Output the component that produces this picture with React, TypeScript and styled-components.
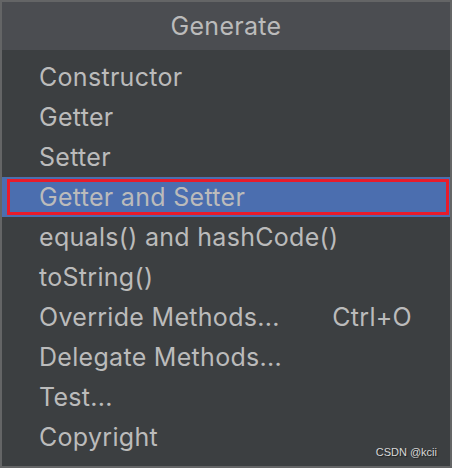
import React from 'react'
import styled, { createGlobalStyle } from 'styled-components'

const GlobalStyle = createGlobalStyle`
	html, body {
		margin: 0;
		padding: 0;
		background: #3c3f41;
	}
`

type Item = { label: string; shortcut?: string }

const items: Item[] = [
	{ label: 'Constructor' },
	{ label: 'Getter' },
	{ label: 'Setter' },
	{ label: 'Getter and Setter' },
	{ label: 'equals() and hashCode()' },
	{ label: 'toString()' },
	{ label: 'Override Methods...', shortcut: 'Ctrl+O' },
	{ label: 'Delegate Methods...' },
	{ label: 'Test...' },
	{ label: 'Copyright' },
]

const Popup = styled.div`
	position: relative;
	width: 452px;
	height: 468px;
	box-sizing: border-box;
	border: 2px solid #646566;
	background: #3c3f41;
	font-family: Inter, 'Noto Sans', sans-serif;
	color: #bbbbbb;
	display: flex;
	flex-direction: column;
`

const Header = styled.div`
	height: 48px;
	background: #4b4d51;
	display: flex;
	align-items: center;
	justify-content: center;
	font-size: 25px;
	letter-spacing: 0.3px;
	box-sizing: border-box;
`

const List = styled.ul`
	list-style: none;
	margin: 0;
	padding: 7px 0 0;
`

const Row = styled.li<{ $selected?: boolean }>`
	position: relative;
	height: 40px;
	display: flex;
	align-items: center;
	padding: 0 38px 0 37px;
	font-size: 25px;
	letter-spacing: 0.3px;
	background: ${(p) => (p.$selected ? '#4b6eaf' : 'transparent')};
`

const Label = styled.span`
	flex: 1;
`

const Shortcut = styled.span`
	margin-right: 0;
`

// red annotation box drawn over the selected row
const Marker = styled.div`
	position: absolute;
	left: 5px;
	right: 1px;
	top: 2px;
	bottom: 2px;
	border: 3px solid #e81c2b;
	pointer-events: none;
`

const Watermark = styled.div`
	position: absolute;
	right: 13px;
	bottom: 8px;
	font-family: 'Liberation Sans', Arial, sans-serif;
	font-size: 11px;
	color: #d8d8d8;
	text-shadow: 1px 1px 1px rgba(0, 0, 0, 0.5);
`

export default function App() {
	return (
		<>
			<GlobalStyle />
			<Popup>
				<Header>Generate</Header>
				<List>
					{items.map((item, i) => (
						<Row key={item.label} $selected={i === 3}>
							<Label>{item.label}</Label>
							{item.shortcut && <Shortcut>{item.shortcut}</Shortcut>}
							{i === 3 && <Marker />}
						</Row>
					))}
				</List>
				<Watermark>CSDN @kcii</Watermark>
			</Popup>
		</>
	)
}
